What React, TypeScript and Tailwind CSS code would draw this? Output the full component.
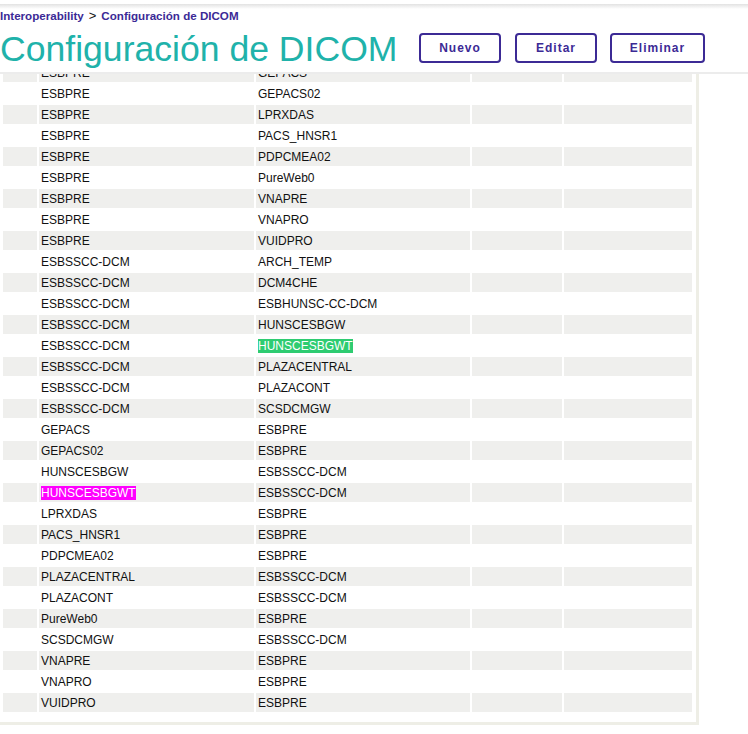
import React from "react";

type Row = { a: string; b: string; ha?: string; hb?: string };

const rows: Row[] = [
  { a: "ESBPRE", b: "GEPACS" },
  { a: "ESBPRE", b: "GEPACS02" },
  { a: "ESBPRE", b: "LPRXDAS" },
  { a: "ESBPRE", b: "PACS_HNSR1" },
  { a: "ESBPRE", b: "PDPCMEA02" },
  { a: "ESBPRE", b: "PureWeb0" },
  { a: "ESBPRE", b: "VNAPRE" },
  { a: "ESBPRE", b: "VNAPRO" },
  { a: "ESBPRE", b: "VUIDPRO" },
  { a: "ESBSSCC-DCM", b: "ARCH_TEMP" },
  { a: "ESBSSCC-DCM", b: "DCM4CHE" },
  { a: "ESBSSCC-DCM", b: "ESBHUNSC-CC-DCM" },
  { a: "ESBSSCC-DCM", b: "HUNSCESBGW" },
  { a: "ESBSSCC-DCM", b: "HUNSCESBGWT", hb: "green" },
  { a: "ESBSSCC-DCM", b: "PLAZACENTRAL" },
  { a: "ESBSSCC-DCM", b: "PLAZACONT" },
  { a: "ESBSSCC-DCM", b: "SCSDCMGW" },
  { a: "GEPACS", b: "ESBPRE" },
  { a: "GEPACS02", b: "ESBPRE" },
  { a: "HUNSCESBGW", b: "ESBSSCC-DCM" },
  { a: "HUNSCESBGWT", b: "ESBSSCC-DCM", ha: "magenta" },
  { a: "LPRXDAS", b: "ESBPRE" },
  { a: "PACS_HNSR1", b: "ESBPRE" },
  { a: "PDPCMEA02", b: "ESBPRE" },
  { a: "PLAZACENTRAL", b: "ESBSSCC-DCM" },
  { a: "PLAZACONT", b: "ESBSSCC-DCM" },
  { a: "PureWeb0", b: "ESBPRE" },
  { a: "SCSDCMGW", b: "ESBSSCC-DCM" },
  { a: "VNAPRE", b: "ESBPRE" },
  { a: "VNAPRO", b: "ESBPRE" },
  { a: "VUIDPRO", b: "ESBPRE" },
];

function Cell({ text, hl }: { text: string; hl?: string }) {
  if (hl === "green") {
    return <span className="bg-[#2ecc71] text-white">{text}</span>;
  }
  if (hl === "magenta") {
    return <span className="bg-[#ff00ff] text-white">{text}</span>;
  }
  return <>{text}</>;
}

export default function App() {
  return (
    <div className="w-[748px] h-[734px] bg-white overflow-hidden font-['Liberation_Sans',Arial,sans-serif]">
      {/* Header */}
      <div className="relative z-10 bg-white">
        <div className="h-[72px] flex flex-col">
          <div className="h-[4px] bg-white" />
          <div className="h-[5px] bg-gradient-to-b from-[#e2e2e2] to-white" />
          <div className="h-[14px] leading-[14px] text-[11.6px] whitespace-nowrap">
            <span className="font-bold text-[#3b2a96]">Interoperability</span>
            <span className="text-[#111] text-[13px] px-[5px]">&gt;</span>
            <span className="font-bold text-[#3b2a96]">Configuración de DICOM</span>
          </div>
          <div className="flex items-start mt-[8px]">
            <div className="w-[419px] h-[36px] leading-[36px] text-[35.6px] text-[#20b2aa] whitespace-nowrap">
              Configuración de DICOM
            </div>
            <div className="flex mt-[2px]">
              <button className="w-[82px] h-[30px] border-2 border-[#3c2a95] rounded-[4px] text-[12px] font-bold tracking-[1px] text-[#3c2a95] bg-white">
                Nuevo
              </button>
              <button className="ml-[14px] w-[82px] h-[30px] border-2 border-[#3c2a95] rounded-[4px] text-[12px] font-bold tracking-[1px] text-[#3c2a95] bg-white">
                Editar
              </button>
              <button className="ml-[13px] w-[95px] h-[30px] border-2 border-[#3c2a95] rounded-[4px] text-[12px] font-bold tracking-[1px] text-[#3c2a95] bg-white">
                Eliminar
              </button>
            </div>
          </div>
        </div>
        <div className="h-[2px] bg-[#ececec]" />
      </div>

      {/* Table container */}
      <div className="w-[699px] border-r-[3px] border-b-[3px] border-[#eeeee6] pb-[8px] overflow-hidden">
        <table className="-mt-[13px] ml-px table-fixed border-separate border-spacing-[2px] text-[12px] text-[#111] w-[693px]">
          <colgroup>
            <col className="w-[34px]" />
            <col className="w-[215px]" />
            <col className="w-[214px]" />
            <col className="w-[90px]" />
            <col className="w-[128px]" />
          </colgroup>
          <tbody>
            {rows.map((r, i) => {
              const gray = i % 2 === 0;
              const bg = gray ? "bg-[#efefed]" : "";
              return (
                <tr key={i}>
                  <td className={`h-[19px] p-0 ${bg}`} />
                  <td className={`h-[19px] p-0 pl-[2px] pt-[2px] leading-[17px] whitespace-nowrap ${bg}`}>
                    <Cell text={r.a} hl={r.ha} />
                  </td>
                  <td className={`h-[19px] p-0 pl-[2px] pt-[2px] leading-[17px] whitespace-nowrap ${bg}`}>
                    <Cell text={r.b} hl={r.hb} />
                  </td>
                  <td className={`h-[19px] p-0 ${bg}`} />
                  <td className={`h-[19px] p-0 ${bg}`} />
                </tr>
              );
            })}
          </tbody>
        </table>
      </div>
    </div>
  );
}
